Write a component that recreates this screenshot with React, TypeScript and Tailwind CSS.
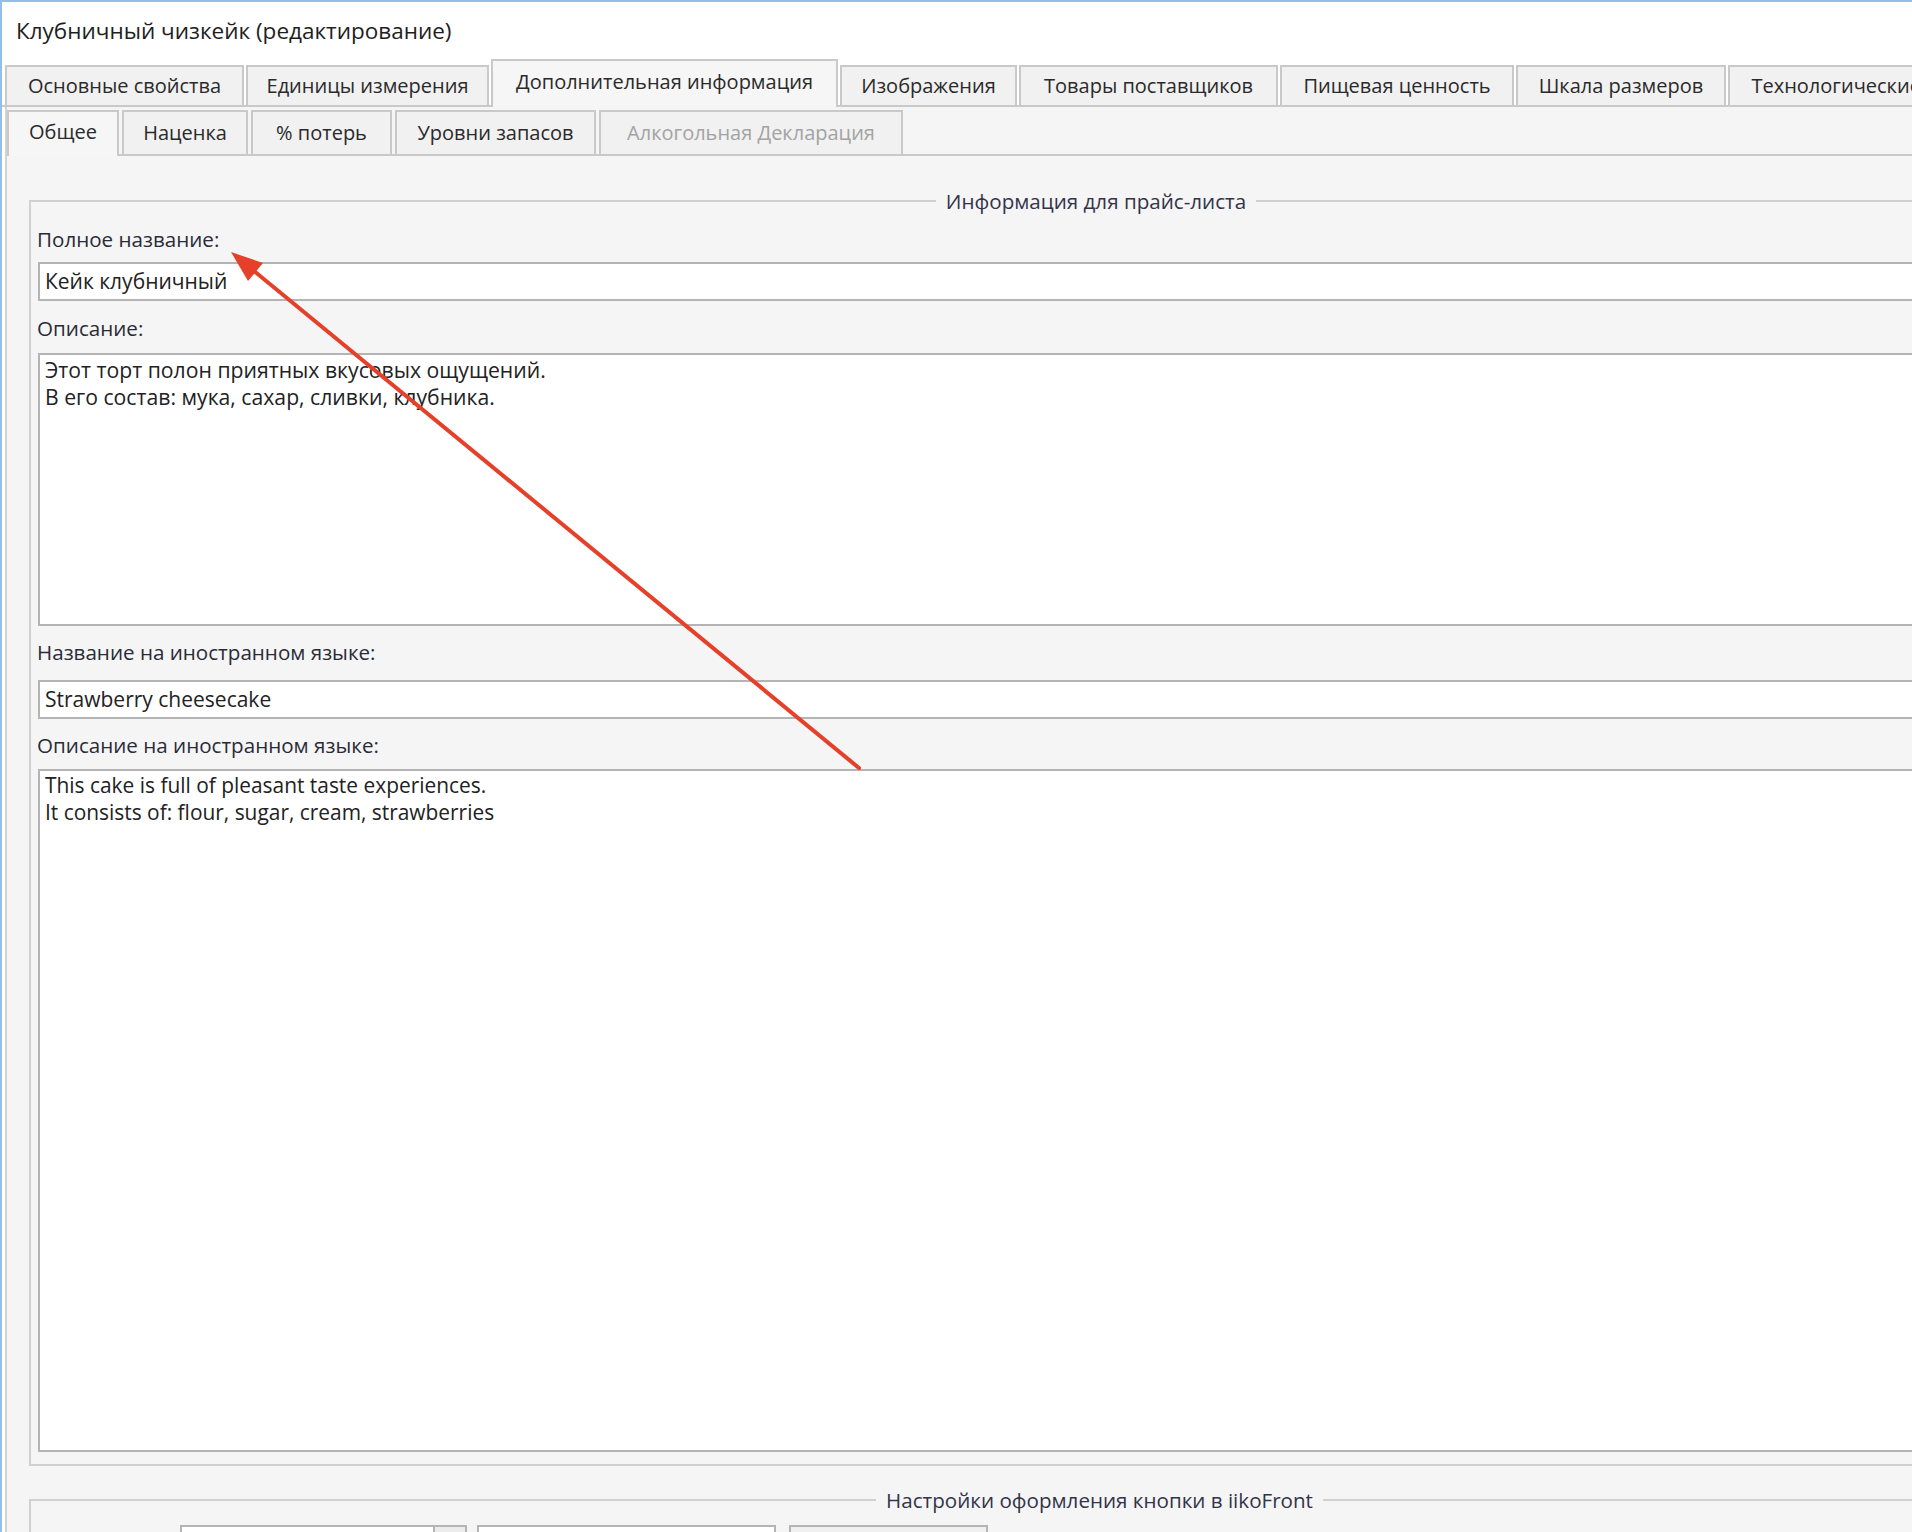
const topTabs = [
  { label: "Основные свойства", w: "w-[239px]", active: false },
  { label: "Единицы измерения", w: "w-[243px]", active: false },
  { label: "Дополнительная информация", w: "w-[347px]", active: true },
  { label: "Изображения", w: "w-[177px]", active: false },
  { label: "Товары поставщиков", w: "w-[259px]", active: false },
  { label: "Пищевая ценность", w: "w-[234px]", active: false },
  { label: "Шкала размеров", w: "w-[210px]", active: false },
  { label: "Технологические карты", w: "w-[280px]", active: false },
];

const subTabs = [
  { label: "Общее", w: "w-[112px]", active: true, disabled: false },
  { label: "Наценка", w: "w-[126px]", active: false, disabled: false },
  { label: "% потерь", w: "w-[141px]", active: false, disabled: false },
  { label: "Уровни запасов", w: "w-[201px]", active: false, disabled: false },
  { label: "Алкогольная Декларация", w: "w-[304px]", active: false, disabled: true },
];

function Field({ children }: { children: React.ReactNode }) {
  return (
    <div className="h-[39px] bg-white border-2 border-[#b4b4b4] pl-[5px] flex items-center text-[21px] text-[#222]">
      {children}
    </div>
  );
}

export default function App() {
  return (
    <div
      className="relative w-[1912px] h-[1532px] overflow-hidden bg-white border-t-2 border-l-2 border-[#95bde9] text-[20px]"
      style={{ fontFamily: '"Open Sans", "Liberation Sans", sans-serif' }}
    >
      {/* title */}
      <div className="h-[57px] flex items-center pl-[14px] text-[22.5px] text-[#1e1e1e]">
        Клубничный чизкейк (редактирование)
      </div>

      <div className="w-[2200px]">
        {/* main tabs */}
        <div className="h-[48px] flex items-end gap-[2px] pl-[3px] border-b-2 border-[#c9c9c9]">
          {topTabs.map((t) => (
            <div
              key={t.label}
              className={
                t.active
                  ? `${t.w} shrink-0 h-[48px] -mb-[2px] bg-[#f6f6f6] border-2 border-b-0 border-[#c9c9c9] flex items-center justify-center pb-[4px] text-[#2a2a2a]`
                  : `${t.w} shrink-0 h-[40px] bg-[#f1f1f1] border-2 border-b-0 border-[#c9c9c9] flex items-center justify-center text-[#2a2a2a]`
              }
            >
              {t.label}
            </div>
          ))}
        </div>

        {/* page */}
        <div className="ml-[3px] border-l-2 border-[#d2d2d2] bg-[#f5f5f5]">
          <div className="h-[49px] flex items-end gap-[3px] border-b-2 border-[#c9c9c9]">
            {subTabs.map((t) => (
              <div
                key={t.label}
                className={
                  t.active
                    ? `${t.w} shrink-0 h-[46px] -mb-[2px] bg-[#f6f6f6] border-2 border-b-0 border-[#c9c9c9] flex items-center justify-center pb-[4px] text-[#2a2a2a]`
                    : `${t.w} shrink-0 h-[44px] bg-[#f1f1f1] border-2 border-b-0 border-[#c9c9c9] flex items-center justify-center ${
                        t.disabled ? "text-[#a3a3a3]" : "text-[#2a2a2a]"
                      }`
                }
              >
                {t.label}
              </div>
            ))}
          </div>

          <div className="pl-[22px] pt-[32px] pb-[40px] text-[20.6px] text-[#2b2b38]">
            <fieldset className="w-[2134px] border-2 border-[#d0d0d0] pl-[7px] pr-[7px] pb-[12px]">
              <legend className="mx-auto px-[10px] leading-[26px] text-[#33334a]">Информация для прайс-листа</legend>
              <div className="mt-[12px] -ml-[1px] leading-[26px]">Полное название:</div>
              <div className="mt-[10px]">
                <Field>Кейк клубничный</Field>
              </div>
              <div className="mt-[14px] -ml-[1px] leading-[26px]">Описание:</div>
              <div className="mt-[12px] h-[273px] bg-white border-2 border-[#b4b4b4] pl-[5px] pt-[1px] leading-[27px] text-[21.2px] text-[#222]">
                <div>Этот торт полон приятных вкусовых ощущений.</div>
                <div>В его состав: мука, сахар, сливки, клубника.</div>
              </div>
              <div className="mt-[13px] -ml-[1px] leading-[26px]">Название на иностранном языке:</div>
              <div className="mt-[15px]">
                <Field>Strawberry cheesecake</Field>
              </div>
              <div className="mt-[13px] -ml-[1px] leading-[26px]">Описание на иностранном языке:</div>
              <div className="mt-[11px] h-[683px] bg-white border-2 border-[#b4b4b4] pl-[5px] pt-[1px] leading-[27px] text-[20.9px] text-[#222]">
                <div>This cake is full of pleasant taste experiences.</div>
                <div>It consists of: flour, sugar, cream, strawberries</div>
              </div>
            </fieldset>

            <fieldset className="mt-[21px] w-[2134px] border-2 border-[#d0d0d0] pl-[7px] pb-[12px]">
              <legend className="mx-auto px-[10px] leading-[26px] text-[#33334a]">Настройки оформления кнопки в iikoFront</legend>
              <div className="mt-[12px] ml-[142px] flex items-start">
                <div className="w-[255px] h-[36px] bg-white border-2 border-[#b4b4b4]" />
                <div className="w-[32px] h-[36px] bg-[#ececec] border-2 border-l-0 border-[#b4b4b4]" />
                <div className="ml-[10px] w-[299px] h-[36px] bg-white border-2 border-[#b4b4b4]" />
                <div className="ml-[13px] w-[199px] h-[36px] bg-[#f0f0f0] border-2 border-[#b4b4b4]" />
              </div>
            </fieldset>
          </div>
        </div>
      </div>

      {/* annotation arrow */}
      <svg className="absolute left-0 top-0 pointer-events-none" width="1912" height="1532">
        <line x1="857" y1="766" x2="252" y2="269" stroke="#e5402a" strokeWidth="4" strokeLinecap="round" />
        <polygon points="229,250 261,261 246,279" fill="#e5402a" />
      </svg>
    </div>
  );
}
